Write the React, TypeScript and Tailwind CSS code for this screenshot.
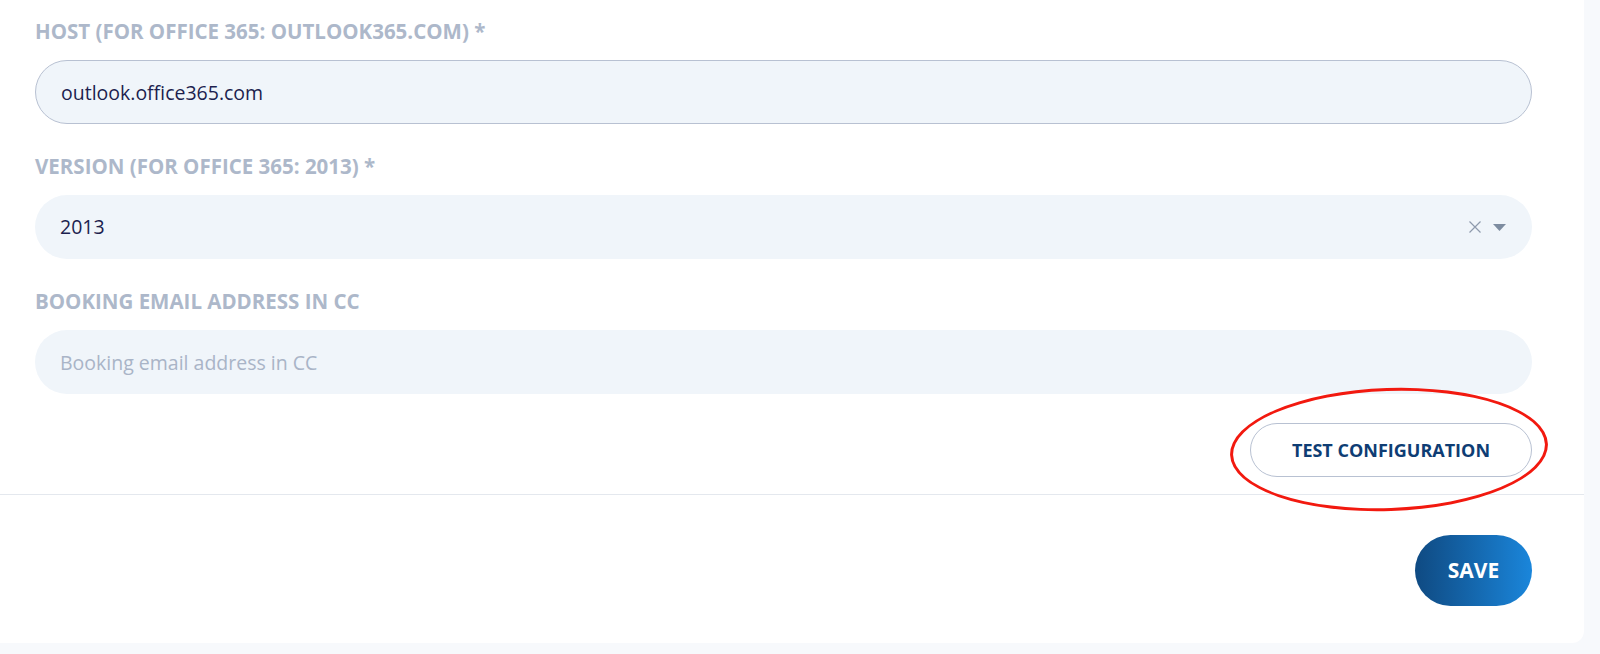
import React from 'react';

const labelCls = "block text-[20.5px] leading-[24px] font-bold uppercase text-[#adb8ca] mb-[17px]";
const fieldCls = "h-[64px] w-full rounded-full bg-[#f0f5fa] px-[25px] text-[19.5px] text-[#1d1f4f] outline-none placeholder:text-[#a9b4c7]";

const App: React.FC = () => {
    return (
        <div className="min-h-[654px] bg-[#f7f9fc] pb-[11px] font-['Open_Sans',sans-serif]">
            <div className="relative w-[1584px] bg-white rounded-br-[12px]">
                <div className="pl-[35px] pr-[52px] pt-[19px] pb-[17px]">
                    <div className="flex flex-col gap-[30px]">
                        <div>
                            <label className={labelCls}>Host (for Office 365: outlook365.com) *</label>
                            <input
                                className={`${fieldCls} border border-[#b8c1d2]`}
                                defaultValue="outlook.office365.com"
                            />
                        </div>
                        <div>
                            <label className={labelCls}>Version (for Office 365: 2013) *</label>
                            <div className="flex h-[64px] w-full items-center rounded-full bg-[#f0f5fa] pl-[25px] pr-[26px]">
                                <span className="flex-1 text-[19.5px] text-[#1d1f4f]">2013</span>
                                <svg className="h-[12px] w-[12px]" viewBox="0 0 12 12">
                                    <path d="M0.5 0.5l11 11M11.5 0.5l-11 11" stroke="#8e9aad" strokeWidth="1.2" fill="none" />
                                </svg>
                                <svg className="ml-[12px] h-[7px] w-[13px]" viewBox="0 0 13 7">
                                    <path d="M0 0h13L6.5 7z" fill="#7d8ca0" />
                                </svg>
                            </div>
                        </div>
                        <div>
                            <label className={labelCls}>Booking email address in CC</label>
                            <input className={fieldCls} placeholder="Booking email address in CC" />
                        </div>
                    </div>
                    <div className="mt-[29px] flex justify-end">
                        <button className="h-[54px] w-[282px] rounded-full border-[1.5px] border-[#b8c1d2] bg-white text-[18px] font-bold uppercase text-[#0e3d74]">
                            Test configuration
                        </button>
                    </div>
                </div>
                <div className="border-t border-[#e4e8ee] pl-[35px] pr-[52px] pt-[40px] pb-[37px] flex justify-end">
                    <button className="h-[71px] w-[117px] rounded-full bg-gradient-to-r from-[#0f4a82] to-[#1a86db] text-[21px] font-bold uppercase text-white">
                        Save
                    </button>
                </div>
                {/* red circle marking the test button */}
                <div className="pointer-events-none absolute left-[1230px] top-[388px] h-[123px] w-[318px] rounded-[50%] border-[3px] border-[#f2190f] -rotate-[2deg]" />
            </div>
        </div>
    );
};

export default App;
